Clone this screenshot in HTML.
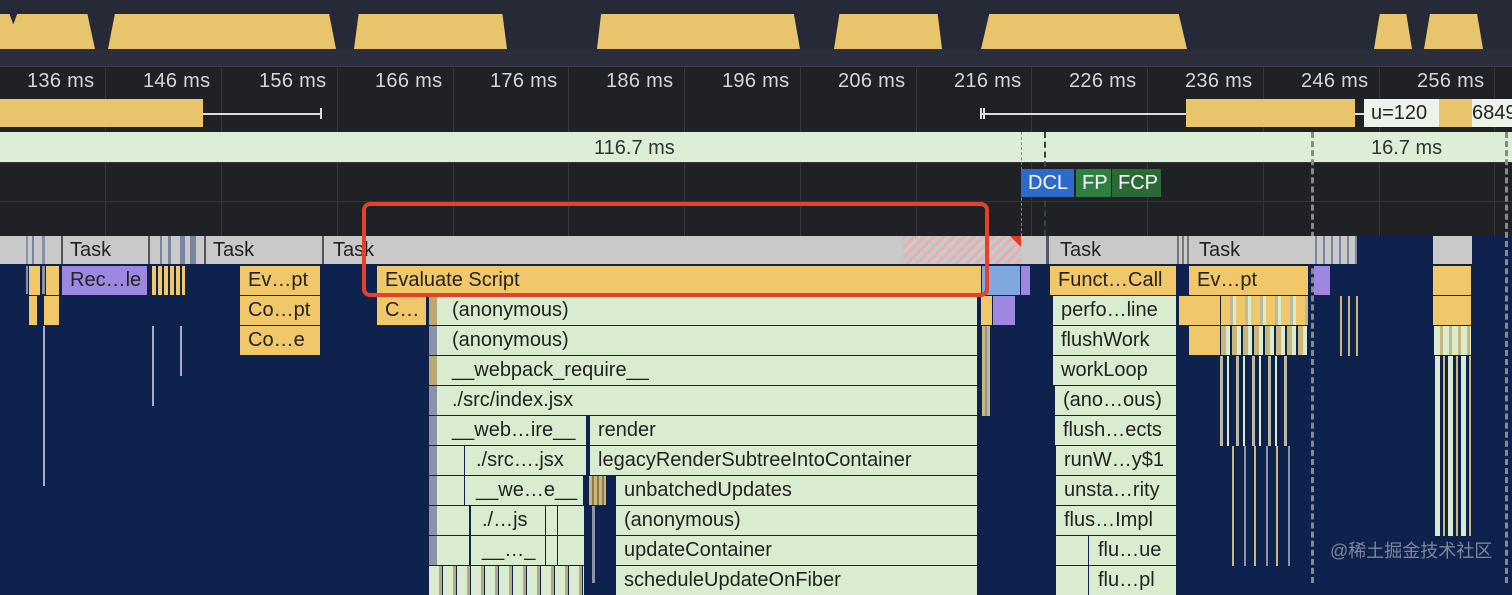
<!DOCTYPE html>
<html><head><meta charset="utf-8"><style>
*{margin:0;padding:0}
body{width:1512px;height:583px;overflow:hidden;background:#0f224d;position:relative;font-family:"Liberation Sans","Noto Sans CJK SC",sans-serif}
div{position:absolute;box-sizing:border-box}
.ov{top:14px;height:35px;background:#e8c46c}
.lab{top:70px;font-size:20px;color:#d6d6d6;white-space:nowrap;letter-spacing:0.3px}
.g{top:66px;width:1px;height:170px;background:#34363c}
.f{height:29px;line-height:29px;font-size:20px;color:#222;padding-left:8px;overflow:hidden;white-space:nowrap;border-right:1px solid #0f224d}
.y{background:#f0c869}.gr{background:#d9ecd0}.p{background:#9e87e0}.b{background:#7fa7e0}
.t{top:236px;height:28px;line-height:28px;font-size:20px;color:#222;padding-left:8px}
</style></head><body>
<div style="left:0;top:0;width:1512px;height:66px;background:#262a36"></div>
<div style="left:0;top:49px;width:1512px;height:17px;background:#2b2f3b"></div>
<div class="ov" style="left:0;width:95px;clip-path:polygon(0 0,10% 0,14% 30%,18% 0,92% 0,100% 100%,0 100%)"></div>
<div class="ov" style="left:108px;width:228px;clip-path:polygon(3% 0,97% 0,100% 100%,0 100%)"></div>
<div class="ov" style="left:354px;width:153px;clip-path:polygon(3% 0,97% 0,100% 100%,0 100%)"></div>
<div class="ov" style="left:597px;width:203px;clip-path:polygon(2% 0,97% 0,100% 100%,0 100%)"></div>
<div class="ov" style="left:834px;width:108px;clip-path:polygon(5% 0,96% 0,100% 100%,0 100%)"></div>
<div class="ov" style="left:981px;width:206px;clip-path:polygon(4% 0,96% 0,100% 100%,0 100%)"></div>
<div class="ov" style="left:1374px;width:38px;clip-path:polygon(15% 0,85% 0,100% 100%,0 100%)"></div>
<div class="ov" style="left:1424px;width:59px;clip-path:polygon(10% 0,90% 0,100% 100%,0 100%)"></div>
<div style="left:0;top:66px;width:1512px;height:170px;background:#202124"></div>
<div style="left:0;top:66px;width:1512px;height:1px;background:#3a3d45"></div>
<div class="g" style="left:105px"></div><div class="g" style="left:221px"></div><div class="g" style="left:337px"></div><div class="g" style="left:453px"></div><div class="g" style="left:568px"></div><div class="g" style="left:684px"></div><div class="g" style="left:800px"></div><div class="g" style="left:916px"></div><div class="g" style="left:1031px"></div><div class="g" style="left:1147px"></div><div class="g" style="left:1263px"></div><div class="g" style="left:1379px"></div><div class="g" style="left:1494px"></div>
<div style="left:0;top:162px;width:1512px;height:1px;background:#34363c"></div>
<div style="left:0;top:201px;width:1512px;height:1px;background:#34363c"></div>
<div class="lab" style="left:27px">136 ms</div><div class="lab" style="left:143px">146 ms</div><div class="lab" style="left:259px">156 ms</div><div class="lab" style="left:375px">166 ms</div><div class="lab" style="left:490px">176 ms</div><div class="lab" style="left:606px">186 ms</div><div class="lab" style="left:722px">196 ms</div><div class="lab" style="left:838px">206 ms</div><div class="lab" style="left:954px">216 ms</div><div class="lab" style="left:1069px">226 ms</div><div class="lab" style="left:1185px">236 ms</div><div class="lab" style="left:1301px">246 ms</div><div class="lab" style="left:1417px">256 ms</div>
<div style="left:0;top:99px;width:203px;height:28px;background:#e8c46c"></div>
<div style="left:203px;top:113px;width:118px;height:2px;background:#ddd"></div>
<div style="left:320px;top:108px;width:2px;height:11px;background:#ddd"></div>
<div style="left:981px;top:113px;width:205px;height:2px;background:#ddd"></div>
<div style="left:980px;top:108px;width:2px;height:11px;background:#ddd"></div><div style="left:983px;top:108px;width:2px;height:11px;background:#ddd"></div>
<div style="left:1186px;top:99px;width:169px;height:28px;background:#e8c46c"></div>
<div style="left:1355px;top:113px;width:10px;height:2px;background:#ddd"></div>
<div style="left:1364px;top:99px;width:75px;height:28px;background:#eef3ea;font-size:20px;line-height:28px;padding-left:7px;color:#222;overflow:hidden">u=120</div>
<div style="left:1439px;top:99px;width:33px;height:28px;background:#e8c46c"></div>
<div style="left:1472px;top:99px;width:40px;height:28px;background:#eef3ea;font-size:20px;line-height:28px;color:#222;overflow:hidden">6849</div>
<div style="left:0;top:132px;width:1512px;height:30px;background:#dcefd6"></div>
<div style="left:594px;top:137px;font-size:20px;color:#333">116.7 ms</div>
<div style="left:1371px;top:137px;font-size:20px;color:#333">16.7 ms</div>
<div style="left:1021px;top:132px;width:0;height:104px;border-left:1px dashed #5b8fd0"></div>
<div style="left:1044px;top:132px;width:0;height:104px;border-left:2px dashed #2d4a2d"></div>
<div style="left:1311px;top:132px;width:0;height:451px;border-left:3px dashed #888"></div>
<div style="left:1505px;top:132px;width:0;height:451px;border-left:3px dashed #888"></div>
<div style="left:1021px;top:169px;width:53px;height:28px;background:#2d6acb;color:#fff;font-size:20px;line-height:28px;padding-left:7px">DCL</div>
<div style="left:1076px;top:169px;width:35px;height:28px;background:#2e8040;color:#fff;font-size:20px;line-height:28px;padding-left:6px">FP</div>
<div style="left:1112px;top:169px;width:49px;height:28px;background:#2b6a37;color:#fff;font-size:20px;line-height:28px;padding-left:6px">FCP</div>
<div style="left:0;top:236px;width:1357px;height:28px;background:#c9c9c9"></div>
<div style="left:1433px;top:236px;width:39px;height:28px;background:#c9c9c9"></div>
<div style="left:903px;top:236px;width:118px;height:28px;background:repeating-linear-gradient(135deg,#e4b0b0 0 3px,#c9c9c9 3px 7px)"></div>
<div style="left:1010px;top:236px;width:11px;height:11px;background:#e53a25;clip-path:polygon(0 0,100% 0,100% 100%)"></div>
<div style="left:26px;top:236px;width:2px;height:58px;background:#8891a8"></div><div style="left:32px;top:236px;width:2px;height:58px;background:#7a84a0"></div><div style="left:42px;top:236px;width:3px;height:58px;background:#8891a8"></div>
<div style="left:61px;top:236px;width:2px;height:28px;background:#555"></div><div style="left:148px;top:236px;width:2px;height:28px;background:#555"></div>
<div style="left:160px;top:236px;width:2px;height:28px;background:#7a84a0"></div><div style="left:168px;top:236px;width:3px;height:28px;background:#7a84a0"></div><div style="left:180px;top:236px;width:5px;height:28px;background:#7a84a0"></div><div style="left:190px;top:236px;width:6px;height:28px;background:#7a84a0"></div>
<div style="left:204px;top:236px;width:2px;height:28px;background:#555"></div><div style="left:322px;top:236px;width:2px;height:28px;background:#555"></div>
<div style="left:1021px;top:236px;width:29px;height:28px;background:#c9c9c9"></div>
<div style="left:1046px;top:236px;width:3px;height:28px;background:#556"></div>
<div style="left:1177px;top:236px;width:12px;height:28px;background:repeating-linear-gradient(90deg,#777 0 2px,#c9c9c9 2px 5px)"></div>
<div style="left:1309px;top:236px;width:48px;height:28px;background:repeating-linear-gradient(90deg,#c9c9c9 0 6px,#7a84a0 6px 8px)"></div>
<div class="t" style="left:62px">Task</div><div class="t" style="left:205px">Task</div><div class="t" style="left:325px">Task</div><div class="t" style="left:1052px">Task</div><div class="t" style="left:1191px">Task</div>
<div style="left:0;top:264px;width:1357px;height:2px;background:#0f224d"></div>
<div class="f p" style="left:62px;top:266px;width:86px">Rec…le</div>
<div class="f y" style="left:240px;top:266px;width:81px">Ev…pt</div>
<div class="f y" style="left:377px;top:266px;width:605px">Evaluate Script</div>
<div class="f b" style="left:982px;top:266px;width:39px"></div>
<div class="f p" style="left:1021px;top:266px;width:10px"></div>
<div class="f y" style="left:1050px;top:266px;width:127px">Funct…Call</div>
<div class="f y" style="left:1189px;top:266px;width:120px">Ev…pt</div>
<div class="f p" style="left:1314px;top:266px;width:17px"></div>
<div class="f y" style="left:1433px;top:266px;width:39px"></div>
<div class="f y" style="left:29px;top:266px;width:12px"></div><div class="f y" style="left:46px;top:266px;width:14px"></div>
<div class="f y" style="left:152px;top:266px;width:34px;background:repeating-linear-gradient(90deg,#f0c869 0 4px,#0f224d 4px 6px)"></div>
<div class="f y" style="left:240px;top:296px;width:81px">Co…pt</div>
<div class="f y" style="left:377px;top:296px;width:50px">C…</div>
<div class="f gr" style="left:429px;top:296px;width:549px;padding-left:23px;background:linear-gradient(90deg,#b8a874 0 8px,#d9ecd0 8px)">(anonymous)</div>
<div class="f y" style="left:981px;top:296px;width:12px"></div>
<div class="f p" style="left:993px;top:296px;width:23px"></div>
<div class="f gr" style="left:1053px;top:296px;width:124px">perfo…line</div>
<div class="f y" style="left:1179px;top:296px;width:42px"></div>
<div class="f y" style="left:1221px;top:296px;width:88px;background:repeating-linear-gradient(90deg,#f0c869 0 9px,#bdb9a0 9px 12px,#d9ecd0 12px 15px)"></div>
<div class="f y" style="left:1433px;top:296px;width:39px"></div>
<div class="f y" style="left:29px;top:296px;width:5px"></div><div class="f y" style="left:44px;top:296px;width:16px"></div>
<div class="f y" style="left:240px;top:326px;width:81px">Co…e</div>
<div class="f gr" style="left:429px;top:326px;width:549px;padding-left:23px;background:linear-gradient(90deg,#8a93a8 0 8px,#d9ecd0 8px)">(anonymous)</div>
<div class="f gr" style="left:1053px;top:326px;width:124px">flushWork</div>
<div class="f y" style="left:1189px;top:326px;width:32px"></div>
<div class="f y" style="left:1221px;top:326px;width:88px;background:repeating-linear-gradient(90deg,#c9b67a 0 5px,#d9ecd0 5px 9px,#0f224d 9px 11px)"></div>
<div class="f y" style="left:1434px;top:326px;width:38px;background:repeating-linear-gradient(90deg,#d9ecd0 0 6px,#c9b67a 6px 9px)"></div>
<div class="f gr" style="left:429px;top:356px;width:549px;padding-left:23px;background:linear-gradient(90deg,#b8a874 0 8px,#d9ecd0 8px)">__webpack_require__</div>
<div class="f gr" style="left:429px;top:386px;width:549px;padding-left:23px;background:linear-gradient(90deg,#8a93a8 0 8px,#d9ecd0 8px)">./src/index.jsx</div>
<div class="f gr" style="left:429px;top:416px;width:158px;padding-left:23px;background:linear-gradient(90deg,#8a93a8 0 8px,#d9ecd0 8px)">__web…ire__</div>
<div class="f gr" style="left:590px;top:416px;width:388px">render</div>
<div class="f gr" style="left:429px;top:446px;width:158px;padding-left:47px;background:linear-gradient(90deg,#8a93a8 0 8px,#d9ecd0 8px 35px,#0f224d 35px 36px,#d9ecd0 36px)">./src….jsx</div>
<div class="f gr" style="left:590px;top:446px;width:388px">legacyRenderSubtreeIntoContainer</div>
<div class="f gr" style="left:429px;top:476px;width:155px;padding-left:47px;background:linear-gradient(90deg,#8a93a8 0 8px,#d9ecd0 8px 35px,#0f224d 35px 36px,#d9ecd0 36px)">__we…e__</div>
<div class="f y" style="left:589px;top:476px;width:18px;background:repeating-linear-gradient(90deg,#c9b67a 0 3px,#8a7a50 3px 5px)"></div>
<div class="f gr" style="left:616px;top:476px;width:362px">unbatchedUpdates</div>
<div class="f gr" style="left:429px;top:506px;width:156px;padding-left:53px;background:linear-gradient(90deg,#8a93a8 0 8px,#d9ecd0 8px 40px,#0f224d 40px 42px,#d9ecd0 42px 116px,#0f224d 116px 117px,#d9ecd0 117px 128px,#0f224d 128px 129px,#d9ecd0 129px)">./…js</div>
<div class="f gr" style="left:616px;top:506px;width:362px">(anonymous)</div>
<div class="f gr" style="left:429px;top:536px;width:156px;padding-left:53px;background:linear-gradient(90deg,#8a93a8 0 8px,#d9ecd0 8px 40px,#0f224d 40px 42px,#d9ecd0 42px 116px,#0f224d 116px 117px,#d9ecd0 117px 128px,#0f224d 128px 129px,#d9ecd0 129px)">__…_</div>
<div class="f gr" style="left:616px;top:536px;width:362px">updateContainer</div>
<div class="f gr" style="left:429px;top:566px;width:156px;background:repeating-linear-gradient(90deg,#d9ecd0 0 10px,#b8a874 10px 13px,#0f224d 13px 14px)"></div>
<div class="f gr" style="left:616px;top:566px;width:362px">scheduleUpdateOnFiber</div>
<div style="left:592px;top:506px;width:3px;height:77px;background:#8a93a8"></div>
<div class="f gr" style="left:1053px;top:356px;width:124px">workLoop</div>
<div class="f gr" style="left:1055px;top:386px;width:122px">(ano…ous)</div>
<div class="f gr" style="left:1055px;top:416px;width:122px">flush…ects</div>
<div class="f gr" style="left:1056px;top:446px;width:121px">runW…y$1</div>
<div class="f gr" style="left:1056px;top:476px;width:121px">unsta…rity</div>
<div class="f gr" style="left:1056px;top:506px;width:121px">flus…Impl</div>
<div class="f gr" style="left:1056px;top:536px;width:121px;padding-left:42px;background:linear-gradient(90deg,#d9ecd0 0 32px,#0f224d 32px 33px,#d9ecd0 33px)">flu…ue</div>
<div class="f gr" style="left:1056px;top:566px;width:121px;padding-left:42px;background:linear-gradient(90deg,#d9ecd0 0 32px,#0f224d 32px 33px,#d9ecd0 33px)">flu…pl</div>
<div style="left:982px;top:326px;width:8px;height:90px;background:repeating-linear-gradient(90deg,#c9b67a 0 3px,#8a93a8 3px 5px)"></div>
<div style="left:1220px;top:356px;width:70px;height:90px;background:repeating-linear-gradient(90deg,#bdb9a0 0 3px,#0f224d 3px 7px,#d9ecd0 7px 9px,#0f224d 9px 16px)"></div>
<div style="left:1232px;top:446px;width:60px;height:120px;background:repeating-linear-gradient(90deg,#c9b67a 0 2px,#0f224d 2px 12px,#8a93a8 12px 14px,#0f224d 14px 22px)"></div>
<div style="left:1435px;top:356px;width:36px;height:180px;background:repeating-linear-gradient(90deg,#d9ecd0 0 5px,#0f224d 5px 8px,#c9b67a 8px 10px,#0f224d 10px 13px)"></div>
<div style="left:1340px;top:296px;width:20px;height:60px;background:repeating-linear-gradient(90deg,#c9b67a 0 2px,#0f224d 2px 8px)"></div>
<div style="left:43px;top:326px;width:2px;height:160px;background:#aac"></div>
<div style="left:152px;top:326px;width:2px;height:80px;background:#aac"></div>
<div style="left:180px;top:326px;width:2px;height:50px;background:#aac"></div>
<div style="left:362px;top:202px;width:627px;height:95px;border:4px solid #e3412c;border-radius:8px"></div>
<div style="left:1330px;top:542px;font-size:18px;line-height:18px;color:rgba(200,200,200,0.6)">@稀土掘金技术社区</div>
</body></html>
